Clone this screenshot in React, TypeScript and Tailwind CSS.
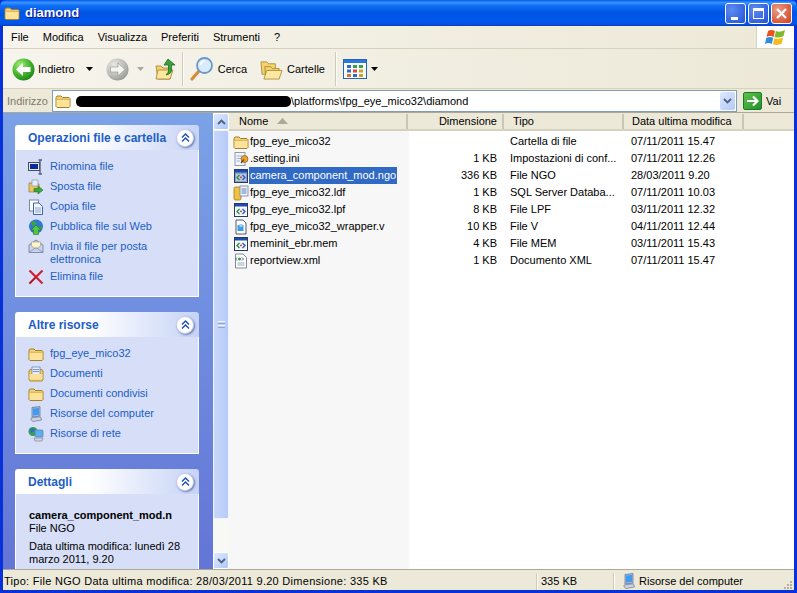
import React from "react";

const Folder = ({ s = 16 }: { s?: number }) => (
  <svg width={s} height={s} viewBox="0 0 16 16" className="shrink-0">
    <path d="M1 4.5 L2 3 H6 L7.5 4.5 H14 L15 5.5 V13.5 L14 14.5 H2 L1 13.5 Z" fill="#f3d27a" stroke="#a5802a" strokeWidth="1" />
    <path d="M1.6 6.6 H14.4 V13.2 L13.6 14 H2.4 L1.6 13.2 Z" fill="#fde39a" />
    <path d="M1.6 6.3 H14.4" stroke="#c79f3c" strokeWidth="0.7" />
  </svg>
);
const DocFolder = () => (
  <svg width="16" height="16" viewBox="0 0 16 16" className="shrink-0">
    <path d="M1 5 L2 3.5 H14 L15 5 V14 L14 15 H2 L1 14 Z" fill="#f0c868" stroke="#a9822b" strokeWidth="0.9" />
    <rect x="4" y="1" width="8" height="9" fill="#e8eefc" stroke="#5f7eb8" strokeWidth="0.7" />
    <path d="M5 3.5H11M5 5.5H11" stroke="#5f7eb8" strokeWidth="0.8" />
    <path d="M1.6 8 H14.4 V13.6 H1.6Z" fill="#fbe29a" />
  </svg>
);
const Computer = ({ s = 16 }: { s?: number }) => (
  <svg width={s} height={s} viewBox="0 0 16 16" className="shrink-0">
    <path d="M4 1.5 L12 0.5 V10 L4 11 Z" fill="#a9bbd9" stroke="#5d6f95" strokeWidth="0.7" />
    <path d="M5 2.6 L11 2 V8.8 L5 9.4 Z" fill="#3f9cf2" />
    <path d="M3 12 L12.5 10.8 L13.5 14 L5 15.5 L3 13.8 Z" fill="#cdd3e0" stroke="#6c7794" strokeWidth="0.7" />
  </svg>
);
const Network = () => (
  <svg width="16" height="16" viewBox="0 0 16 16" className="shrink-0">
    <circle cx="5" cy="5.5" r="4.5" fill="#3a9e4c" />
    <path d="M2 3 Q5 1 7 4 Q5 6 3 7Z" fill="#2a6fd4" />
    <rect x="7" y="4" width="8" height="7" rx="1" fill="#59b0f4" stroke="#5e7aa5" strokeWidth="0.7" />
    <path d="M6 12 H15 L14 15 H7 Z" fill="#cfd3dd" stroke="#747c92" strokeWidth="0.6" />
  </svg>
);
const WinFile = ({ selected = false }: { selected?: boolean }) => (
  <svg width="16" height="16" viewBox="0 0 16 16" className="shrink-0">
    <rect x="1.5" y="1.5" width="13" height="13" fill={selected ? "#8ba0c8" : "#fff"} stroke="#2c3a57" strokeWidth="1" />
    <rect x="2" y="2" width="12" height="2.5" fill="#1c4bb4" />
    <rect x="3" y="6" width="10" height="7" fill={selected ? "#b9c8e4" : "#eef2fa"} />
    <path d="M6.5 7 L4 9.5 L6.5 12" fill="none" stroke="#2a8b3c" strokeWidth="1.3" />
    <path d="M9.5 7 L12 9.5 L9.5 12" fill="none" stroke="#3057b8" strokeWidth="1.3" />
    <rect x="7.2" y="8.6" width="1.6" height="1.6" fill="#c2352a" />
  </svg>
);
const Expand = () => (
  <div className="flex h-[18px] w-[18px] items-center justify-center rounded-full border border-[#c3cdeb] bg-white shadow-[1px_1px_2px_rgba(40,60,130,0.6)]">
    <svg width="9" height="10" viewBox="0 0 9 10">
      <path d="M1 4.5 L4.5 1 L8 4.5 M1 8.5 L4.5 5 L8 8.5" fill="none" stroke="#1c4bb4" strokeWidth="1.4" />
    </svg>
  </div>
);
const ArrowDown = ({ c = "#000" }: { c?: string }) => (
  <svg width="7" height="4" viewBox="0 0 7 4" className="shrink-0"><path d="M0 0H7L3.5 4Z" fill={c} /></svg>
);
const Circle = ({ green, left }: { green: boolean; left: boolean }) => (
  <svg width="23" height="23" viewBox="0 0 23 23" className="shrink-0">
    <defs>
      <radialGradient id="g1" cx="0.35" cy="0.3" r="0.8"><stop offset="0" stopColor="#a5ec7e" /><stop offset="0.55" stopColor="#44b52e" /><stop offset="1" stopColor="#197c16" /></radialGradient>
      <radialGradient id="g2" cx="0.35" cy="0.3" r="0.8"><stop offset="0" stopColor="#e8e8e4" /><stop offset="0.6" stopColor="#bdbdb8" /><stop offset="1" stopColor="#8f8f8c" /></radialGradient>
    </defs>
    <circle cx="11.5" cy="11.5" r="11" fill={green ? "url(#g1)" : "url(#g2)"} />
    {left ? (
      <path d="M4 11.5 L11 5 V9 H18.5 V14 H11 V18 Z" fill="#fff" />
    ) : (
      <path d="M19 11.5 L12 5 V9 H4.5 V14 H12 V18 Z" fill="#f4f4f2" stroke="#8d8d8a" strokeWidth="0.6" />
    )}
  </svg>
);

const Sep = () => <div className="mx-[5px] h-[34px] w-[2px] border-l border-r border-l-[#cfcbb6] border-r-[#fbfaf4]" />;

const tasks1: [React.ReactNode, string][] = [
  [
    <svg width="16" height="16" viewBox="0 0 16 16" className="shrink-0"><rect x="0.5" y="3.5" width="11" height="8" fill="#e7e9f0" stroke="#444c66" /><rect x="2" y="5" width="8" height="5" fill="#0a2aa0" /><path d="M12 1V15M10.5 1H14M10.5 15H14" stroke="#56607d" strokeWidth="1.4" /></svg>,
    "Rinomina file",
  ],
  [
    <svg width="16" height="16" viewBox="0 0 16 16" className="shrink-0"><path d="M1 4H5L6 5H11V13H1Z" fill="#ecc65f" stroke="#8f7a3a" strokeWidth="0.7" /><rect x="4" y="1" width="6" height="6" fill="#e6edfb" stroke="#7a8bb0" strokeWidth="0.6" /><path d="M6 9.5H10V7L15 11L10 15V12.5H6Z" fill="#3caa3e" stroke="#1a6f20" strokeWidth="0.6" /></svg>,
    "Sposta file",
  ],
  [
    <svg width="16" height="16" viewBox="0 0 16 16" className="shrink-0"><rect x="1.5" y="1" width="9" height="11" fill="#fff" stroke="#7588a8" /><path d="M5.5 4H11L14.5 7.5V15.5H5.5Z" fill="#f2f6ff" stroke="#3f62a8" /><path d="M7 9H13M7 11H13M7 13H13" stroke="#86a0d4" /></svg>,
    "Copia file",
  ],
  [
    <svg width="16" height="16" viewBox="0 0 16 16" className="shrink-0"><circle cx="8" cy="7.5" r="7" fill="#2f77d6" /><path d="M3 3 Q7 1 9 4 Q7 7 4 7Z M10 8 Q14 6 14 10 Q12 12 10 11Z" fill="#3ba23e" /><path d="M8 6 L13 11 H10.5 V15.5 H5.5 V11 H3 Z" fill="#58c33d" stroke="#1a7a22" strokeWidth="0.6" /></svg>,
    "Pubblica file sul Web",
  ],
  [
    <svg width="16" height="16" viewBox="0 0 16 16" className="shrink-0"><path d="M1 6 L8 1 L15 6 V13.5 H1Z" fill="#c7d2ec" stroke="#626c8c" strokeWidth="0.7" /><path d="M3.5 7 V3 H12.5 V7 L8 10Z" fill="#fdf5cb" stroke="#a2976b" strokeWidth="0.6" /><path d="M1 13.5 L8 8.5 L15 13.5" fill="none" stroke="#7d88ab" strokeWidth="0.7" /></svg>,
    "Invia il file per posta elettronica",
  ],
  [
    <svg width="16" height="16" viewBox="0 0 16 16" className="shrink-0"><path d="M1.5 1.5 L14.5 14.5 M14.5 1.5 L1.5 14.5" stroke="#d3202f" strokeWidth="2.2" /><path d="M1.5 14.5 L8 8" stroke="#8a1822" strokeWidth="1" /></svg>,
    "Elimina file",
  ],
];
const tasks2: [React.ReactNode, string][] = [
  [<Folder />, "fpg_eye_mico32"],
  [<DocFolder />, "Documenti"],
  [<Folder />, "Documenti condivisi"],
  [<Computer />, "Risorse del computer"],
  [<Network />, "Risorse di rete"],
];

const Panel = ({ title, children, mb = "mb-[15px]" }: { title: string; children: React.ReactNode; mb?: string }) => (
  <div className={`${mb} w-[184px] shrink-0`}>
    <div className="flex h-[25px] items-center justify-between rounded-t-[3px] bg-[linear-gradient(90deg,#ffffff_0%,#ffffff_40%,#c6d3f7_100%)] pl-[13px] pr-[5px]">
      <span className="text-[12px] font-bold text-[#215dc6]">{title}</span>
      <Expand />
    </div>
    <div className="border-x border-b border-white bg-[#d6dff7]">{children}</div>
  </div>
);

const Link = ({ icon, text }: { icon: React.ReactNode; text: string }) => (
  <div className="flex items-start gap-[6px] pb-[4px]">
    {icon}
    <span className="-mb-[1px] pt-[1px] text-[11px] leading-[13px] text-[#215dc6]">{text}</span>
  </div>
);

const rows: [React.ReactNode, string, string, string, string][] = [
  [<Folder />, "fpg_eye_mico32", "", "Cartella di file", "07/11/2011 15.47"],
  [
    <svg width="16" height="16" viewBox="0 0 16 16" className="shrink-0"><rect x="2" y="1.5" width="10" height="13" fill="#f3f5fa" stroke="#8d9ab5" /><path d="M3.5 5H9M3.5 7.5H8M3.5 10H7" stroke="#9fb0d0" /><circle cx="11.5" cy="8" r="3.5" fill="#e8a332" stroke="#8e5a10" strokeWidth="0.7" /><path d="M8 12 L11 8.5" stroke="#59420f" strokeWidth="1.2" /></svg>,
    ".setting.ini", "1 KB", "Impostazioni di conf...", "07/11/2011 12.26",
  ],
  [<WinFile selected />, "camera_component_mod.ngo", "336 KB", "File NGO", "28/03/2011 9.20"],
  [
    <svg width="16" height="16" viewBox="0 0 16 16" className="shrink-0"><rect x="1" y="2" width="7" height="13" rx="1.5" fill="#f1c040" stroke="#9a7a1c" strokeWidth="0.8" /><rect x="7" y="1" width="8" height="10" fill="#eef3fc" stroke="#6f83aa" strokeWidth="0.8" /><path d="M8.5 4H13.5M8.5 6H13.5M8.5 8H13.5" stroke="#5d7cb8" /></svg>,
    "fpg_eye_mico32.ldf", "1 KB", "SQL Server Databa...", "07/11/2011 10.03",
  ],
  [<WinFile />, "fpg_eye_mico32.lpf", "8 KB", "File LPF", "03/11/2011 12.32"],
  [
    <svg width="16" height="16" viewBox="0 0 16 16" className="shrink-0"><path d="M3 1H10L13 4V15H3Z" fill="#fff" stroke="#51596b" /><rect x="4.5" y="6" width="6" height="6" fill="#3f9cd8" /><rect x="6.5" y="5" width="3" height="3" fill="#9bd1f2" /></svg>,
    "fpg_eye_mico32_wrapper.v", "10 KB", "File V", "04/11/2011 12.44",
  ],
  [<WinFile />, "meminit_ebr.mem", "4 KB", "File MEM", "03/11/2011 15.43"],
  [
    <svg width="16" height="16" viewBox="0 0 16 16" className="shrink-0"><path d="M2.5 1H10L13.5 4.5V15H2.5Z" fill="#fff" stroke="#7f8a9e" /><path d="M4 4.5 L2.5 6 L4 7.5 M9 4.5 L10.5 6 L9 7.5" stroke="#3f62a8" fill="none" /><circle cx="6.5" cy="6" r="1.6" fill="#3ba23e" /><path d="M4.5 10H11.5M4.5 12H11.5" stroke="#9aa4b8" /></svg>,
    "reportview.xml", "1 KB", "Documento XML", "07/11/2011 15.47",
  ],
];

const HeadCell = ({ w, children, right, pl = "pl-[9px]" }: { w: string; children: React.ReactNode; right?: boolean; pl?: string }) => (
  <div className={`${w} ${pl} flex h-[15px] shrink-0 items-center whitespace-nowrap border-r-2 border-r-[#cbc7b8] ${right ? "justify-end pr-[5px]" : ""}`}>{children}</div>
);

const ScrollBtn = ({ up }: { up: boolean }) => (
  <div className="flex h-[17px] w-[16px] shrink-0 items-center justify-center rounded-[2px] border border-white bg-[linear-gradient(135deg,#e1eafe,#aec8f7)]">
    <svg width="9" height="6" viewBox="0 0 9 6"><path d={up ? "M1 5 L4.5 1.5 L8 5" : "M1 1 L4.5 4.5 L8 1"} fill="none" stroke="#4d6185" strokeWidth="1.8" /></svg>
  </div>
);

export default function App() {
  return (
    <div
      className="flex h-[593px] w-[797px] flex-col overflow-hidden bg-[#0831d9] text-[11px] text-black"
      style={{ fontFamily: '"Liberation Sans", Arial, sans-serif' }}
    >
      {/* title bar */}
      <div className="flex h-[26px] shrink-0 items-center rounded-t-[6px] bg-[linear-gradient(180deg,#0058ee_0%,#3a93ff_10%,#0f6ef5_22%,#0054e3_50%,#0058ee_80%,#0a52e0_92%,#0040c0_100%)] pl-[4px] pr-[5px]">
        <Folder s={16} />
        <span className="ml-[5px] flex-1 text-[13px] font-bold text-white [text-shadow:1px_1px_#0f1089]">diamond</span>
        <div className="flex gap-[2px]">
          <div className="flex h-[21px] w-[21px] items-end rounded-[3px] border border-white bg-[radial-gradient(circle_at_30%_30%,#5c8cf0,#2450d8)] pb-[3px] pl-[5px]">
            <div className="h-[3px] w-[7px] bg-white" />
          </div>
          <div className="flex h-[21px] w-[21px] items-center justify-center rounded-[3px] border border-white bg-[radial-gradient(circle_at_30%_30%,#5c8cf0,#2450d8)]">
            <div className="h-[11px] w-[11px] border border-t-[3px] border-white" />
          </div>
          <div className="flex h-[21px] w-[21px] items-center justify-center rounded-[3px] border border-white bg-[radial-gradient(circle_at_30%_30%,#ec9a80,#cf3f1c)]">
            <svg width="13" height="13" viewBox="0 0 13 13"><path d="M2 2 L11 11 M11 2 L2 11" stroke="#fff" strokeWidth="2.2" /></svg>
          </div>
        </div>
      </div>

      {/* body frame */}
      <div className="mx-[3px] flex min-h-0 flex-1 flex-col bg-[#ece9d8]">
        {/* menu */}
        <div className="flex h-[23px] shrink-0 border-b border-[#d8d2bd] bg-[linear-gradient(90deg,#f6f4ec,#ece9d8)]">
          <div className="flex flex-1 items-center gap-[14px] pl-[8px] pt-[1px]">
            {["File", "Modifica", "Visualizza", "Preferiti", "Strumenti", "?"].map((m) => (
              <span key={m}>{m}</span>
            ))}
          </div>
          <div className="flex w-[38px] items-center justify-center border-l border-[#d8d2bd] bg-white">
            <svg width="21" height="19" viewBox="0 0 21 19">
              <path d="M3 3 Q6 1 10 3 L8.5 9 Q5 7 1.5 9 Z" fill="#e8541c" />
              <path d="M11 3 Q15 5 20 2 L18.5 8 Q14 10.5 9.5 9 Z" fill="#7fba2c" />
              <path d="M1.2 10 Q5 8 8.2 10 L6.8 16 Q3.5 14 0 16 Z" fill="#2f8de0" />
              <path d="M9.3 10.2 Q14 11.5 18.2 9.5 L16.8 15.5 Q12.5 18 8 16.2 Z" fill="#f7bb1c" />
            </svg>
          </div>
        </div>

        {/* toolbar */}
        <div className="flex h-[40px] shrink-0 items-center border-b border-[#d8d2bd] bg-[linear-gradient(90deg,#f6f4ec,#ece9d8)] pl-[9px] pt-[1px]">
          <Circle green left />
          <span className="ml-[3px]">Indietro</span>
          <div className="ml-[11px]"><ArrowDown /></div>
          <div className="ml-[13px]"><Circle green={false} left={false} /></div>
          <div className="ml-[8px]"><ArrowDown c="#aca899" /></div>
          <svg width="22" height="24" viewBox="0 0 22 24" className="ml-[11px] shrink-0">
            <path d="M1 9 L6 9 L8 11 H15 V22 H3 Z" fill="#f4d26f" stroke="#a17f26" strokeWidth="0.8" />
            <path d="M3 13 H18 L15 22 H1 Z" fill="#fce8a1" stroke="#a17f26" strokeWidth="0.8" />
            <path d="M13 2 L20 8 H16.5 V13 Q16.5 17 11 18 Q14 15 13.5 13 V8 H9 Z" fill="#37a13a" stroke="#1c6c22" strokeWidth="0.8" />
          </svg>
          <Sep />
          <svg width="26" height="26" viewBox="0 0 26 26" className="shrink-0">
            <path d="M3 23 L10 15" stroke="#d98a3c" strokeWidth="3.2" strokeLinecap="round" />
            <circle cx="15.5" cy="9.5" r="7.5" fill="#d9ecfb" stroke="#6c97c9" strokeWidth="1.8" />
            <path d="M11.5 9 Q12 5.5 15.5 5" stroke="#fff" strokeWidth="1.6" fill="none" />
          </svg>
          <span className="ml-[3px]">Cerca</span>
          <svg width="23" height="21" viewBox="0 0 24 22" className="ml-[13px] shrink-0">
            <path d="M1 3 H7 L9 5 H16 V16 H2 Z" fill="#f4d26f" stroke="#a17f26" strokeWidth="0.8" />
            <path d="M5 8 H11 L13 10 H20 V20 H6 Z" fill="#f4d26f" stroke="#a17f26" strokeWidth="0.8" />
            <path d="M7 12 H23 L20 21 H4 Z" fill="#fce8a1" stroke="#a17f26" strokeWidth="0.8" />
          </svg>
          <span className="ml-[4px]">Cartelle</span>
          <div className="ml-[5px]"><Sep /></div>
          <svg width="24" height="20" viewBox="0 0 24 20" className="ml-[1px] shrink-0">
            <rect x="0.5" y="0.5" width="23" height="19" fill="#f8fbff" stroke="#2563b8" />
            <rect x="1" y="1" width="22" height="3" fill="#2a78d8" />
            <rect x="4" y="6" width="4" height="3" fill="#3568c4" /><rect x="10" y="6" width="4" height="3" fill="#3ba23e" /><rect x="16" y="6" width="4" height="3" fill="#3ba23e" />
            <rect x="4" y="10.5" width="4" height="3" fill="#3568c4" /><rect x="10" y="10.5" width="4" height="3" fill="#d8483c" /><rect x="16" y="10.5" width="4" height="3" fill="#c9a227" />
            <rect x="4" y="15" width="4" height="3" fill="#e07030" /><rect x="10" y="15" width="4" height="3" fill="#3568c4" /><rect x="16" y="15" width="4" height="3" fill="#c9a227" />
          </svg>
          <div className="ml-[4px]"><ArrowDown /></div>
        </div>

        {/* address */}
        <div className="flex h-[23px] shrink-0 items-center bg-[#ece9d8] pt-[1px]">
          <span className="w-[49px] pl-[4px] text-[#7d7a6c]">Indirizzo</span>
          <div className="flex h-[22px] w-[685px] items-center border border-[#7f9db9] bg-white pl-[2px]">
            <Folder />
            <div className="ml-[5px] h-[11px] w-[215px] rounded-[5px] bg-black" />
            <span className="flex-1">\platforms\fpg_eye_mico32\diamond</span>
            <div className="mr-[1px] flex h-[18px] w-[15px] items-center justify-center rounded-[2px] bg-[linear-gradient(135deg,#dfe8fd,#b5c9f5)]">
              <svg width="9" height="6" viewBox="0 0 9 6"><path d="M1 1 L4.5 4.5 L8 1" fill="none" stroke="#4d6185" strokeWidth="1.8" /></svg>
            </div>
          </div>
          <div className="ml-[6px] flex h-[18px] w-[19px] items-center justify-center rounded-[2px] border border-[#1c7a26] bg-[linear-gradient(135deg,#5fc24c,#24902c)]">
            <svg width="13" height="12" viewBox="0 0 13 12"><path d="M1 6H11M7 1.5 L11.5 6 L7 10.5" fill="none" stroke="#fff" strokeWidth="2.2" /></svg>
          </div>
          <span className="ml-[4px]">Vai</span>
        </div>

        {/* content */}
        <div className="flex min-h-0 flex-1 border-t border-[#aca899]">
          {/* sidebar */}
          <div className="flex w-[210px] shrink-0 flex-col overflow-hidden bg-[linear-gradient(180deg,#7ba2e7,#6375d6)] pl-[12px] pt-[12px]">
            <Panel title="Operazioni file e cartella">
              <div className="pb-[7px] pl-[12px] pr-[8px] pt-[9px]">
                {tasks1.map(([i, t]) => <Link key={t} icon={i} text={t} />)}
              </div>
            </Panel>
            <Panel title="Altre risorse">
              <div className="pb-[7px] pl-[12px] pr-[8px] pt-[9px]">
                {tasks2.map(([i, t]) => <Link key={t} icon={i} text={t} />)}
              </div>
            </Panel>
            <Panel title="Dettagli" mb="mb-0">
              <div className="h-[90px] overflow-hidden pl-[13px] pt-[15px] leading-[13px]">
                <div className="whitespace-nowrap font-bold">camera_component_mod.n</div>
                <div>File NGO</div>
                <div className="mt-[5px] pr-[8px]">Data ultima modifica: lunedì 28 marzo 2011, 9.20</div>
              </div>
            </Panel>
          </div>

          {/* left scrollbar */}
          <div className="flex w-[16px] shrink-0 flex-col bg-[#f8f8f4]">
            <ScrollBtn up />
            <div className="flex h-[389px] w-[16px] shrink-0 items-center justify-center rounded-[2px] border border-[#f0f4ff] bg-[linear-gradient(90deg,#c9d8fb,#b6cbf8)]">
              <div className="flex flex-col gap-[1px]">
                <div className="h-[1px] w-[7px] bg-[#eef4ff]" /><div className="h-[1px] w-[7px] bg-[#8ea6d8]" />
                <div className="h-[1px] w-[7px] bg-[#eef4ff]" /><div className="h-[1px] w-[7px] bg-[#8ea6d8]" />
              </div>
            </div>
            <div className="flex-1" />
            <ScrollBtn up={false} />
          </div>

          {/* list */}
          <div className="flex min-w-0 flex-1 flex-col bg-white">
            <div className="flex h-[18px] shrink-0 items-center border-b-[2px] border-[#d6d2c2] bg-[#ece9d8]">
              <HeadCell w="w-[179px]" pl="pl-[10px]">
                <span>Nome</span>
                <svg width="11" height="6" viewBox="0 0 13 7" className="ml-[9px]"><path d="M0 7 L6.5 0 L13 7Z" fill="#aca899" /></svg>
              </HeadCell>
              <HeadCell w="w-[96px]" right>Dimensione</HeadCell>
              <HeadCell w="w-[120px]">Tipo</HeadCell>
              <HeadCell w="w-[120px]" pl="pl-[8px]">Data ultima modifica</HeadCell>
            </div>
            <div className="relative flex-1 bg-[linear-gradient(90deg,#f7f7f7_180px,#ffffff_180px)] pt-[2px]">
              {rows.map(([icon, n, d, t, m]) => {
                const sel = n.startsWith("camera");
                return (
                  <div key={n} className="flex h-[17px] items-center">
                    <div className="flex w-[179px] shrink-0 items-center pl-[4px]">
                      {icon}
                      <span className={`whitespace-nowrap px-[1px] leading-[17px] ${sel ? "bg-[#316ac5] text-white" : ""}`}>{n}</span>
                    </div>
                    <div className="w-[96px] shrink-0 pr-[7px] text-right">{d}</div>
                    <div className="w-[120px] shrink-0 whitespace-nowrap pl-[6px]">{t}</div>
                    <div className="w-[120px] shrink-0 pl-[7px]">{m}</div>
                  </div>
                );
              })}
            </div>
          </div>
        </div>

        {/* status */}
        <div className="flex h-[21px] shrink-0 items-center border-t border-[#aca899] bg-[#ece9d8] pt-[2px]">
          <span className="w-[533px] shrink-0 whitespace-nowrap pl-[1px] tracking-[0.28px]">Tipo: File NGO Data ultima modifica: 28/03/2011 9.20 Dimensione: 335 KB</span>
          <div className="h-[17px] w-[2px] border-l border-r border-l-[#cfcbb6] border-r-white" />
          <span className="w-[75px] shrink-0 pl-[3px]">335 KB</span>
          <div className="h-[17px] w-[2px] border-l border-r border-l-[#cfcbb6] border-r-white" />
          <div className="ml-[6px]"><Computer s={16} /></div>
          <span className="ml-[2px]">Risorse del computer</span>
          <div className="mb-[1px] ml-auto mr-[2px] mt-auto grid grid-cols-3 gap-[1px]">
            <div className="h-[2px] w-[2px]" /><div className="h-[2px] w-[2px]" /><div className="h-[2px] w-[2px] bg-[#b5b1a0]" />
            <div className="h-[2px] w-[2px]" /><div className="h-[2px] w-[2px] bg-[#b5b1a0]" /><div className="h-[2px] w-[2px] bg-[#b5b1a0]" />
            <div className="h-[2px] w-[2px] bg-[#b5b1a0]" /><div className="h-[2px] w-[2px] bg-[#b5b1a0]" /><div className="h-[2px] w-[2px] bg-[#b5b1a0]" />
          </div>
        </div>
      </div>
      <div className="h-[3px] shrink-0" />
    </div>
  );
}
